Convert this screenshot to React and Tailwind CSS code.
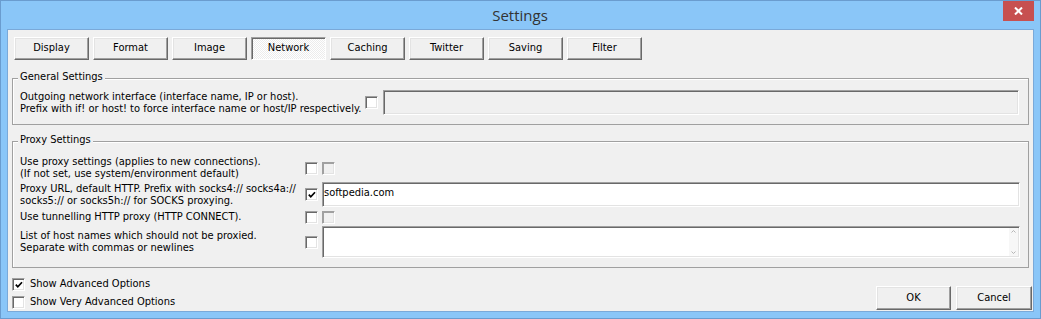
import React from 'react';

const tabs = ['Display', 'Format', 'Image', 'Network', 'Caching', 'Twitter', 'Saving', 'Filter'];

const Btn = ({ children, pressed, className = '' }) => (
  <div
    className={
      'flex items-center justify-center border ' +
      (pressed
        ? 'border-t-[#a0a0a0] border-l-[#a0a0a0] border-b-white border-r-white shadow-[inset_1px_1px_0_#696969] bg-[repeating-conic-gradient(#ffffff_0_25%,#ececec_0_50%)] bg-size-[2px_2px] '
        : 'border-t-white border-l-white border-b-[#696969] border-r-[#696969] shadow-[inset_-1px_-1px_0_#a0a0a0,inset_1px_1px_0_#e3e3e3] bg-[#f0f0f0] ') +
      className
    }
  >
    {children}
  </div>
);

const Check = ({ checked, disabled }) => (
  <div
    className={
      'w-[13px] h-[13px] shrink-0 flex items-center justify-center border border-t-[#a0a0a0] border-l-[#a0a0a0] border-b-white border-r-white ' +
      (disabled
        ? 'bg-[#f0f0f0] shadow-[inset_1px_1px_0_#a0a0a0,inset_-1px_-1px_0_#e3e3e3]'
        : 'bg-white shadow-[inset_1px_1px_0_#696969,inset_-1px_-1px_0_#e3e3e3]')
    }
  >
    {checked && (
      <svg width="8" height="8" viewBox="0 0 8 8" className="mt-[1px] ml-[1px]">
        <polyline points="0.8,3.6 2.8,5.8 7,1.2" fill="none" stroke="#000" strokeWidth="1.7" />
      </svg>
    )}
  </div>
);

const sunken =
  'border border-t-[#a0a0a0] border-l-[#a0a0a0] border-b-white border-r-white shadow-[inset_1px_1px_0_#696969,inset_-1px_-1px_0_#e3e3e3]';

const Group = ({ title, className = '', children }) => (
  <div className={'relative mx-[4px] border border-[#a0a0a0] shadow-[inset_1px_1px_0_#ffffff] ' + className}>
    <div className="absolute left-[5px] -top-[8px] px-[2px] bg-[#f0f0f0] leading-[12px]">{title}</div>
    {children}
  </div>
);

const Label = ({ lines, className = '' }) => (
  <div className={'shrink-0 pl-[7px] leading-[12px] ' + className}>
    {lines.map((l) => (
      <div key={l} className="whitespace-nowrap">{l}</div>
    ))}
  </div>
);

export default function App() {
  return (
    <div className="w-[1041px] h-[319px] bg-[#8ac6f8] border border-[#6a9ccf] flex flex-col font-['DejaVu_Sans_Condensed','Liberation_Sans',sans-serif] text-[11px] text-black">
      {/* Title bar */}
      <div className="h-[28px] flex items-start shrink-0">
        <div className="w-[36px] shrink-0" />
        <div className="flex-1 h-[28px] flex items-center justify-center text-[15px] text-[#333] font-['Open_Sans',sans-serif]">
          Settings
        </div>
        <div className="w-[31px] h-[20px] mr-[6px] bg-[#c75050] flex items-center justify-center">
          <svg width="9" height="8" viewBox="0 0 9 8">
            <path d="M1 0.5 L8 7.5 M8 0.5 L1 7.5" stroke="#fff" strokeWidth="2" />
          </svg>
        </div>
      </div>

      {/* Client */}
      <div className="mx-[6px] h-[283px] border border-[#7aa9d9] bg-[#f0f0f0] flex flex-col">
        {/* Tabs */}
        <div className="flex gap-[4px] pt-[7px] pl-[6px]">
          {tabs.map((t) => (
            <Btn key={t} pressed={t === 'Network'} className="w-[75px] h-[23px]">
              {t}
            </Btn>
          ))}
        </div>

        {/* General settings */}
        <Group title="General Settings" className="mt-[18px] h-[47px]">
          <div className="flex items-center pt-[11px] pr-[9px]">
            <Label
              className="w-[352px]"
              lines={[
                'Outgoing network interface (interface name, IP or host).',
                'Prefix with if! or host! to force interface name or host/IP respectively.',
              ]}
            />
            <Check />
            <div className={'flex-1 ml-[5px] h-[25px] bg-[#f0f0f0] ' + sunken} />
          </div>
        </Group>

        {/* Proxy settings */}
        <Group title="Proxy Settings" className="mt-[16px] h-[127px]">
          <div className="flex flex-col pt-[13px] pr-[8px]">
            <div className="flex items-center h-[26px]">
              <Label
                className="w-[292px]"
                lines={['Use proxy settings (applies to new connections).', '(If not set, use system/environment default)']}
              />
              <Check />
              <div className="ml-[4px]">
                <Check disabled />
              </div>
            </div>
            <div className="flex items-center h-[27px]">
              <Label
                className="w-[292px]"
                lines={['Proxy URL, default HTTP. Prefix with socks4:// socks4a://', 'socks5:// or socks5h:// for SOCKS proxying.']}
              />
              <Check checked />
              <div className={'flex-1 ml-[4px] h-[25px] bg-white pl-[1px] pt-[4px] leading-[12px] ' + sunken}>
                softpedia.com
              </div>
            </div>
            <div className="flex items-center h-[18px]">
              <Label className="w-[292px]" lines={['Use tunnelling HTTP proxy (HTTP CONNECT).']} />
              <Check />
              <div className="ml-[4px]">
                <Check disabled />
              </div>
            </div>
            <div className="flex items-center h-[32px]">
              <Label
                className="w-[292px]"
                lines={['List of host names which should not be proxied.', 'Separate with commas or newlines']}
              />
              <Check />
              <div className={'flex-1 ml-[4px] h-[32px] bg-white flex justify-end ' + sunken}>
                <div className="w-[9px] my-[1px] mr-[1px] bg-[#f7f7f7] flex flex-col justify-between items-center py-[2px]">
                  <svg width="5" height="3" viewBox="0 0 5 3">
                    <path d="M0.5 2.5 L2.5 0.5 L4.5 2.5" stroke="#b5b5b5" fill="none" />
                  </svg>
                  <svg width="5" height="3" viewBox="0 0 5 3">
                    <path d="M0.5 0.5 L2.5 2.5 L4.5 0.5" stroke="#b5b5b5" fill="none" />
                  </svg>
                </div>
              </div>
            </div>
          </div>
        </Group>

        {/* Bottom */}
        <div className="flex justify-between">
          <div className="flex flex-col pl-[4px] pt-[10px] gap-[5px]">
            <div className="flex items-center h-[13px] gap-[5px]">
              <Check checked />
              <span>Show Advanced Options</span>
            </div>
            <div className="flex items-center h-[13px] gap-[5px]">
              <Check />
              <span>Show Very Advanced Options</span>
            </div>
          </div>
          <div className="flex gap-[5px] pt-[18px] pr-[1px]">
            <Btn className="w-[75px] h-[24px]">OK</Btn>
            <Btn className="w-[76px] h-[24px]">Cancel</Btn>
          </div>
        </div>
      </div>
    </div>
  );
}
